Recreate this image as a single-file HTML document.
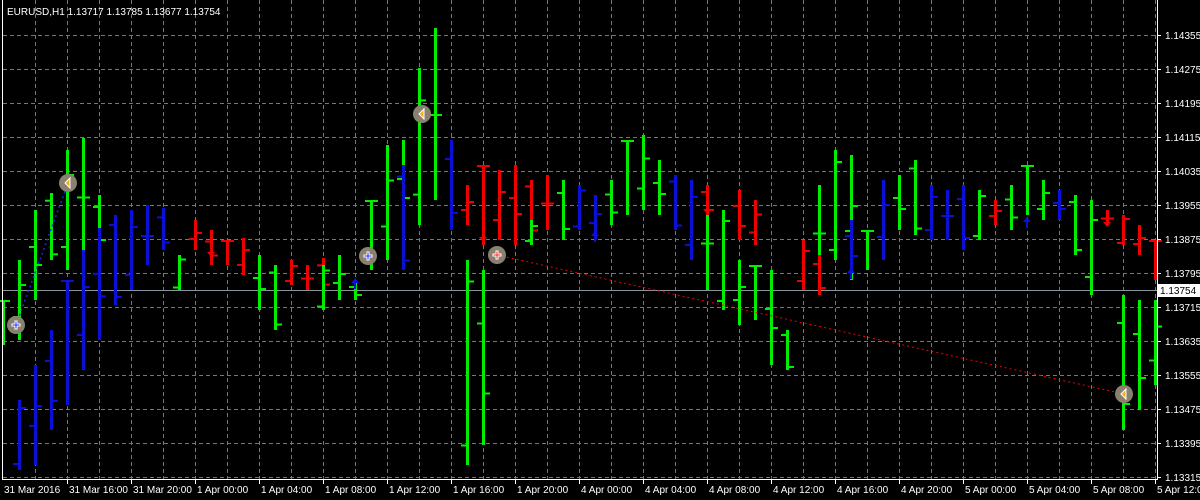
<!DOCTYPE html>
<html><head><meta charset="utf-8"><style>
html,body{margin:0;padding:0;background:#000;width:1200px;height:500px;overflow:hidden}
svg text{font-family:"Liberation Sans",sans-serif;font-size:10px;fill:#fff}
</style></head><body>
<svg id="s" width="1200" height="500" xmlns="http://www.w3.org/2000/svg">
<rect width="1200" height="500" fill="#000"/>
<g id="grid" stroke="#6f7780" stroke-width="1" stroke-dasharray="4,3"></g>
<line x1="3" y1="290.5" x2="1157" y2="290.5" stroke="#8a95a0"/>
<g id="bars"></g>
<polyline points="497,255 1124,394" stroke="#e00" stroke-width="1" stroke-dasharray="2,3" fill="none"/>
<polyline points="16,325 68,183" stroke="#22e" stroke-width="1.5" stroke-dasharray="2,3" fill="none"/>
<g id="marks"></g>
<line x1="2.5" y1="0" x2="2.5" y2="480" stroke="#fff"/>
<line x1="1157.5" y1="0" x2="1157.5" y2="480" stroke="#fff"/>
<line x1="2" y1="479.5" x2="1158" y2="479.5" stroke="#fff"/>
<g id="ax"></g>
<rect x="1158" y="284" width="42" height="13" fill="#fff"/>
<text x="1160" y="294" style="fill:#000">1.13754</text>
<text x="7" y="15">EURUSD,H1  1.13717 1.13785 1.13677 1.13754</text>
</svg>
<script>
var NS="http://www.w3.org/2000/svg";
function el(p,t,a,txt){var e=document.createElementNS(NS,t);for(var k in a)e.setAttribute(k,a[k]);if(txt)e.textContent=txt;document.getElementById(p).appendChild(e);return e;}
for(var i=0;i<14;i++){var y=35+34*i+0.5;el("grid","line",{x1:3,y1:y,x2:1157,y2:y});}
for(var x=35;x<1157;x+=32){el("grid","line",{x1:x+0.5,y1:0,x2:x+0.5,y2:479});}
var prices=["1.14355","1.14275","1.14195","1.14115","1.14035","1.13955","1.13875","1.13795","1.13715","1.13635","1.13555","1.13475","1.13395","1.13315"];
for(var i=0;i<14;i++){var y=35+34*i;el("ax","line",{x1:1157,y1:y+0.5,x2:1161,y2:y+0.5,stroke:"#fff"});el("ax","text",{x:1165,y:y+4},prices[i]);}
var labs=["31 Mar 2016","31 Mar 16:00","31 Mar 20:00","1 Apr 00:00","1 Apr 04:00","1 Apr 08:00","1 Apr 12:00","1 Apr 16:00","1 Apr 20:00","4 Apr 00:00","4 Apr 04:00","4 Apr 08:00","4 Apr 12:00","4 Apr 16:00","4 Apr 20:00","5 Apr 00:00","5 Apr 04:00","5 Apr 08:00","5 Apr 12:00"];
for(var i=0;i<labs.length;i++){var tx=1091-64*(17-i);if(i>0)el("ax","line",{x1:tx+0.5,y1:479,x2:tx+0.5,y2:484,stroke:"#fff"});el("ax","text",{x:i==0?4:tx+2,y:493},labs[i]);}
var G="#00ee00",B="#0a10d8",R="#ee0000";
var bars=[
[3,300,345,G],[19,260,340,G],[35,210,300,G],[51,193,260,G],[67,150,270,G],[83,138,255,G],[99,195,250,G],
[19,400,470,B],[35,365,465,B],[51,330,430,B],[67,280,405,B],[83,250,370,B],[99,228,340,B],[115,215,305,B],[131,210,290,B],[147,205,265,B],[163,208,250,B],
[179,255,290,G],[195,220,250,R],[211,230,265,R],[227,240,265,R],[243,238,275,R],[259,255,310,G],[275,265,330,G],[291,260,285,R],[307,265,290,R],[323,258,290,R],[323,265,310,G],[339,255,300,G],[355,280,300,G],[371,200,270,G],[387,145,260,G],[403,140,235,G],[403,165,270,B],[419,68,225,G],[435,28,200,G],[451,140,230,B],
[467,260,465,G],[467,185,225,R],[483,270,445,G],[483,165,245,R],[499,170,240,R],[515,165,245,R],[531,180,235,R],[531,220,245,G],[547,175,230,R],[563,180,240,G],[579,185,230,B],[595,195,240,B],[611,180,225,G],[627,140,215,G],[643,135,210,G],[659,160,215,G],[675,175,230,B],[691,180,260,B],[707,195,290,G],[707,185,215,R],[723,210,310,G],[739,260,325,G],[739,190,240,R],[755,265,320,G],[755,200,245,R],[771,270,365,G],[787,330,370,G],[803,240,290,R],[819,185,280,G],[819,255,295,R],[835,150,260,G],[851,155,280,G],[851,220,270,B],[867,230,270,G],[883,180,260,B],[899,175,230,G],[915,160,235,G],[931,185,240,B],[947,190,240,B],[963,185,250,B],[979,190,240,G],[995,200,225,R],[1011,185,230,G],[1027,165,215,G],[1043,180,220,G],[1059,190,220,B],[1075,195,255,G],[1091,200,295,G],[1107,210,225,R],[1123,295,430,G],[1123,215,245,R],[1139,225,255,R],[1139,300,410,G],[1155,240,280,R],[1155,300,385,G]];
bars.forEach(function(b,i){var x=b[0],h=b[1],l=b[2],c=b[3];el("bars","rect",{x:x-1,y:h,width:3,height:l-h,fill:c});
var o=h+(l-h)*((i*37%10)/10),cl=h+(l-h)*((i*53%10)/10);
el("bars","rect",{x:x-6,y:o,width:5,height:2,fill:c});el("bars","rect",{x:x+2,y:cl,width:5,height:2,fill:c});});
function arrow(x,y,up,c){var d=up?"M"+x+","+(y-7)+" l-4,5 h3 v6 h2 v-6 h3 z":"M"+x+","+(y+7)+" l-4,-5 h3 v-6 h2 v6 h3 z";el("marks","path",{d:d,fill:c});}
arrow(211,250,false,R);arrow(483,235,false,R);arrow(707,207,false,R);arrow(1107,220,false,R);
arrow(355,285,true,B);arrow(595,238,true,B);arrow(851,275,true,B);arrow(1027,224,true,B);
[[16,325,"b"],[68,183,"y"],[422,114,"y"],[368,256,"b"],[497,255,"r"],[1124,394,"y"]].forEach(function(m){
el("marks","circle",{cx:m[0],cy:m[1],r:9,fill:"#8a8070"});
if(m[2]=="y")el("marks","path",{d:"M"+(m[0]-3)+","+m[1]+" l5,-5 v10 z",fill:"#f0b020",stroke:"#fff","stroke-width":1});
else el("marks","path",{d:"M"+(m[0]-4)+","+(m[1]-1)+"h3v-3h2v3h3v2h-3v3h-2v-3h-3z",fill:m[2]=="b"?"#2030ff":"#ff2020",stroke:"#fff","stroke-width":1});});
</script>
</body></html>
